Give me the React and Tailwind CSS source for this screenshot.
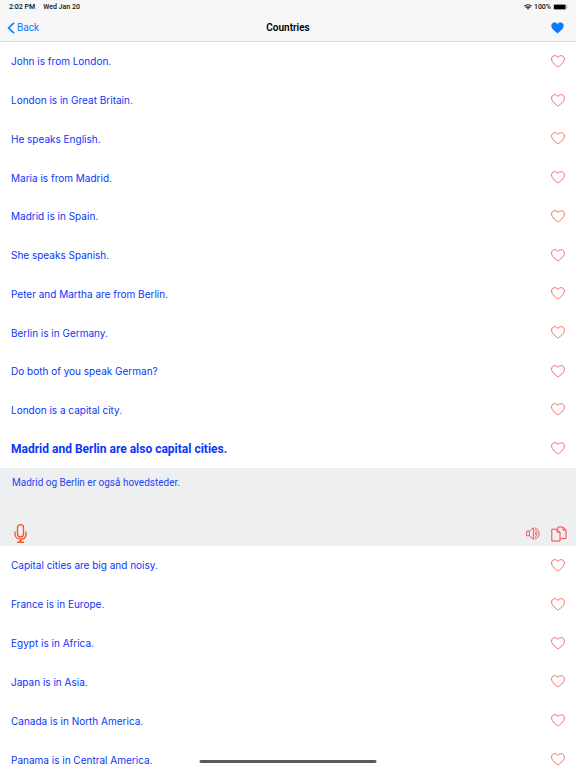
import { useState } from "react";

const BEFORE = [
  "John is from London.",
  "London is in Great Britain.",
  "He speaks English.",
  "Maria is from Madrid.",
  "Madrid is in Spain.",
  "She speaks Spanish.",
  "Peter and Martha are from Berlin.",
  "Berlin is in Germany.",
  "Do both of you speak German?",
  "London is a capital city.",
  "Madrid and Berlin are also capital cities.",
];

const AFTER = [
  "Capital cities are big and noisy.",
  "France is in Europe.",
  "Egypt is in Africa.",
  "Japan is in Asia.",
  "Canada is in North America.",
  "Panama is in Central America.",
];

const HEART = "M7 12C5.2 10.6 .6 7.6 .6 4.1C.6 2 2 .7 3.7 .7C5.2 .7 6.4 1.3 7 2.4C7.6 1.3 8.8 .7 10.3 .7C12 .7 13.4 2 13.4 4.1C13.4 7.6 8.8 10.6 7 12Z";

const Heart = ({ filled, className }) => (
  <svg viewBox="0 0 14 13" className={className} fill={filled ? "currentColor" : "none"} stroke="currentColor" strokeWidth={filled ? 0.6 : 1} strokeLinejoin="round">
    <path d={HEART} />
  </svg>
);

const WifiIcon = () => (
  <svg viewBox="0 0 16 12" className="w-2 h-1.5" fill="none" stroke="#111" strokeWidth="2.4">
    <path d="M1 4.4C5 .6 11 .6 15 4.4" />
    <path d="M3.8 7.4C6.3 5.2 9.7 5.2 12.2 7.4" />
    <path d="M8 11.6L5.8 9.4C7.1 8.3 8.9 8.3 10.2 9.4Z" fill="#111" stroke="none" />
  </svg>
);

const BatteryIcon = () => (
  <svg viewBox="0 0 15 6" className="w-[15px] h-1.5">
    <rect x=".3" y=".3" width="12.9" height="5.4" rx="1.5" fill="none" stroke="#999" strokeWidth=".6" />
    <rect x="1" y=".8" width="11.5" height="4.4" rx=".8" fill="#000" />
    <path d="M13.8 2V4Q14.6 3.7 14.6 3T13.8 2Z" fill="#999" />
  </svg>
);

const MicIcon = () => (
  <svg viewBox="0 0 13 19" className="w-[13px] h-[19px]" fill="none" stroke="#ff4d1c" strokeWidth="1.3">
    <rect x="3.5" y=".7" width="6" height="12.2" rx="3" />
    <path d="M1 7.5V10C1 13.4 3.4 15.2 6.5 15.2S12 13.4 12 10V7.5" />
    <path d="M6.5 15.2V18" strokeWidth="2" />
    <path d="M3 18.2H10" strokeWidth="1.4" />
  </svg>
);

const SpeakerIcon = () => (
  <svg viewBox="0 0 14 13" className="w-3.5 h-[13px]" fill="none" stroke="#f4494d" strokeWidth=".9" strokeLinejoin="round">
    <path d="M.6 4.2H3.4V8.8H.6Z" />
    <path d="M3.4 4.2L7.4 .7V12.3L3.4 8.8" />
    <path d="M8.8 4.7C9.8 5.6 9.8 7.4 8.8 8.3" />
    <path d="M8.8 2.7C11.7 4.1 11.7 8.9 8.8 10.3" />
    <path d="M8.8 .9C14.6 2.6 14.6 10.4 8.8 12.1" />
  </svg>
);

const CopyIcon = () => (
  <svg viewBox="0 0 16 16" className="w-4 h-4" fill="none" stroke="#f4494d" strokeWidth="1" strokeLinejoin="round">
    <path d="M.8 3.2H6L9 6.2V15H.8Z" />
    <path d="M6 3.2V6.2H9" />
    <path d="M7 3.2V1H12L15 4V12.6H9.2" />
    <path d="M12 1V4H15" />
  </svg>
);

const PhraseRow = ({ text, active, liked, onSelect, onLike }) => (
  <li className="flex flex-1 items-center justify-between px-[11px]">
    <button
      onClick={onSelect}
      className={`grow text-left leading-4 text-[#0a35fb] ${active ? "text-[12px] font-bold" : "font-['Inter',sans-serif] text-[10px]"}`}
    >
      {text}
    </button>
    <button onClick={onLike} aria-label={`Favourite: ${text}`} aria-pressed={liked} className="text-[#f26a66]">
      <Heart filled={liked} className="w-3.5 h-[13px]" />
    </button>
  </li>
);

const App = () => {
  const [active, setActive] = useState("Madrid and Berlin are also capital cities.");
  const [liked, setLiked]   = useState([]);

  const toggleLike = (text) =>
    setLiked((prev) => (prev.includes(text) ? prev.filter((t) => t !== text) : [...prev, text]));

  const renderRow = (text) => (
    <PhraseRow
      key={text}
      text={text}
      active={active === text}
      liked={liked.includes(text)}
      onSelect={() => setActive(text)}
      onLike={() => toggleLike(text)}
    />
  );

  return (
    <div className="relative h-screen overflow-hidden bg-white font-['Roboto',sans-serif]">
      <header className="bg-[#f7f7f7] border-b border-[#dedede]">
        {/* Status bar */}
        <div className="flex h-3.5 items-center justify-between pl-[9px] pr-2 text-[7px] leading-none font-medium text-[#111]">
          <div className="flex gap-2">
            <span>2:02 PM</span>
            <span>Wed Jan 20</span>
          </div>
          <div className="flex items-center gap-0.5">
            <WifiIcon />
            <span>100%</span>
            <BatteryIcon />
          </div>
        </div>

        {/* Navigation bar */}
        <nav className="grid h-[27px] grid-cols-3 items-center px-[7px]">
          <a href="#back" className="flex items-center gap-0.5 text-[10px] text-[#0a7aff]">
            <svg viewBox="0 0 8 12" className="w-2 h-3" fill="none" stroke="currentColor" strokeWidth="1.6">
              <path d="M7 .8L1.6 6L7 11.2" />
            </svg>
            Back
          </a>
          <h1 className="text-center text-[10px] font-semibold text-black">Countries</h1>
          <button aria-label="Favourites" className="justify-self-end pr-[5px] text-[#0a7aff]">
            <Heart filled className="w-[13px] h-3" />
          </button>
        </nav>
      </header>

      <main>
        <ul className="flex min-h-[426px] flex-col">{BEFORE.map(renderRow)}</ul>

        <section className="flex min-h-[78px] flex-col justify-between bg-[#edeff1] pt-[7px] pb-[3px] pl-3 pr-[9px]">
          <p className="text-[10px] leading-4 text-[#1f45f5]">Madrid og Berlin er også hovedsteder.</p>
          <div className="flex items-center justify-between">
            <button aria-label="Record" className="pl-0.5"><MicIcon /></button>
            <div className="flex items-center gap-[11px]">
              <button aria-label="Listen"><SpeakerIcon /></button>
              <button aria-label="Copy"><CopyIcon /></button>
            </div>
          </div>
        </section>

        <ul className="flex min-h-[233px] flex-col">{AFTER.map(renderRow)}</ul>
      </main>

      {/* Home indicator */}
      <div className="absolute bottom-[5px] left-1/2 h-[3px] w-[177px] -translate-x-1/2 rounded-full bg-[#5c595b]" />
    </div>
  );
};

export default App;
